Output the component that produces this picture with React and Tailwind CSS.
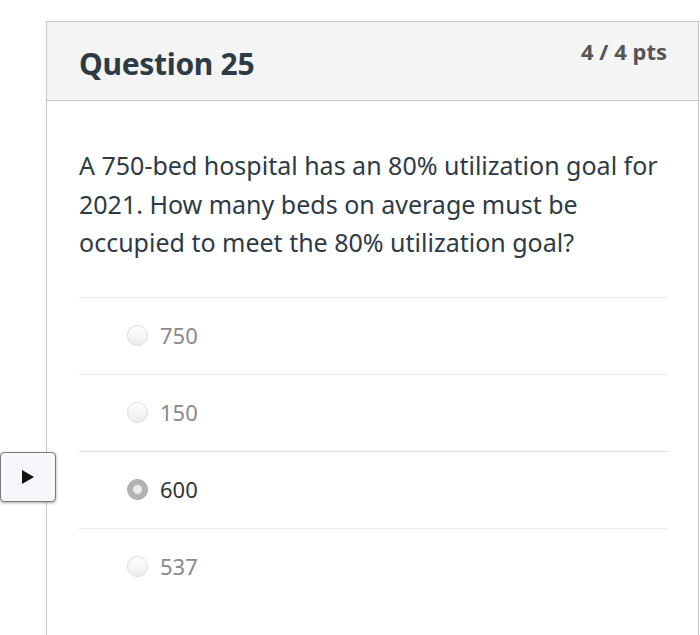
import React from "react";

const answers = [
  { label: "750", selected: false },
  { label: "150", selected: false },
  { label: "600", selected: true },
  { label: "537", selected: false },
];

function Radio({ selected }) {
  if (selected) {
    return (
      <div className="w-[21px] h-[21px] rounded-full bg-[#b3b3b3] border border-[#a6a6a6] flex items-center justify-center">
        <div className="w-[9px] h-[9px] rounded-full bg-[#ececec]" />
      </div>
    );
  }
  return (
    <div className="w-[21px] h-[21px] rounded-full border border-[#dcdcdc] bg-gradient-to-b from-[#ffffff] to-[#ececec]" />
  );
}

export default function App() {
  return (
    <div
      className="relative w-[700px] h-[635px] bg-white overflow-hidden"
      style={{ fontFamily: '"Noto Sans", "Open Sans", sans-serif' }}
    >
      <div className="absolute left-0 top-[452px] w-[56px] h-[50px] rounded-[4px] border border-[#7a7a7a] bg-[#f5f7fa] shadow-[0_1px_3px_rgba(0,0,0,0.35)] flex items-center justify-center z-10">
        <svg width="12" height="14" viewBox="0 0 12 14">
          <path d="M0 0 L12 7 L0 14 Z" fill="#111" />
        </svg>
      </div>
      <div className="ml-[46px] mt-[21px] w-[653px] h-[700px] border border-[#c6c6c6] border-b-0">
        <div className="h-[79px] bg-[#f4f4f4] border-b border-[#c6c6c6] flex items-start justify-between pl-[32px] pr-[31px]">
          <div className="text-[30px] font-bold text-[#2d3b45] mt-[22px] leading-[40px] tracking-[-0.3px]">
            Question 25
          </div>
          <div className="text-[22px] font-bold text-[#555] mt-[15px] leading-[28px]">
            4 / 4 pts
          </div>
        </div>
        <div className="pl-[32px] pr-[31px] pt-[45px]">
          <p className="text-[25px] leading-[38.5px] text-[#2d3b45] w-[590px]">
            A 750-bed hospital has an 80% utilization goal for 2021. How many beds on average must be occupied to meet the 80% utilization goal?
          </p>
          <div className="mt-[35px]">
            {answers.map((a) => (
              <div
                key={a.label}
                className={`h-[77px] border-t ${a.selected ? "border-[#dcdcdc]" : "border-[#ebebeb]"} flex items-center pl-[48px]`}
              >
                <Radio selected={a.selected} />
                <span
                  className={`ml-[12px] text-[22px] ${a.selected ? "text-[#333]" : "text-[#8a8a8a]"}`}
                >
                  {a.label}
                </span>
              </div>
            ))}
          </div>
        </div>
      </div>
    </div>
  );
}
